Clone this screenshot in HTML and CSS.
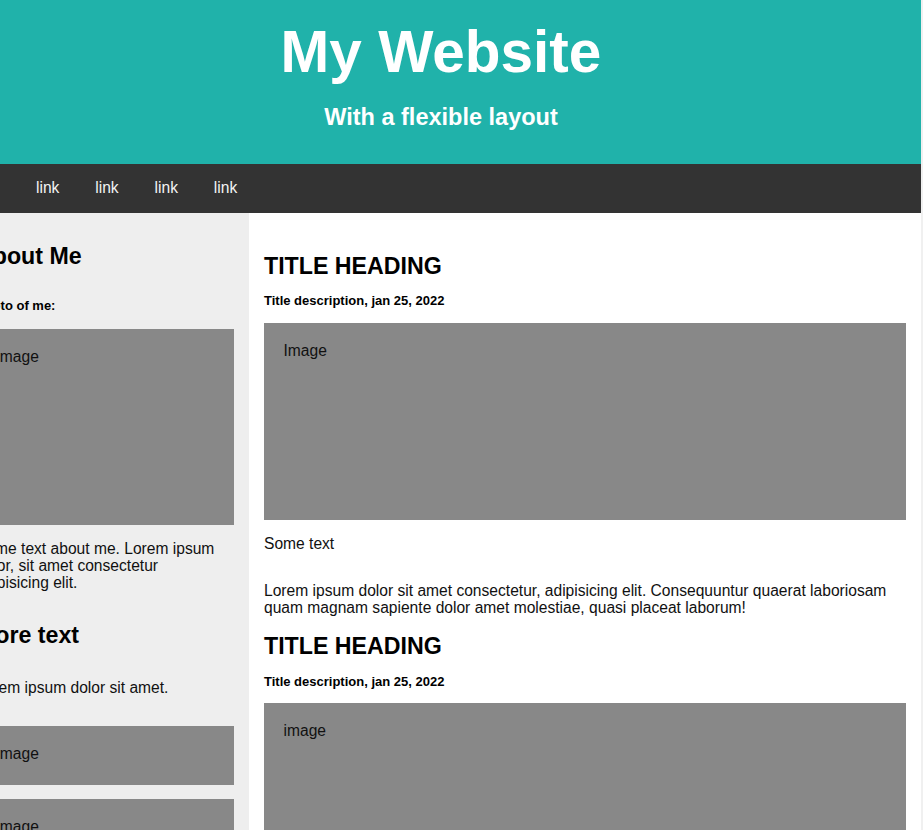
FILE: index.html
```html
<!DOCTYPE html>
<html lang="en">
<head>
<meta charset="utf-8">
<title>My Website</title>
<link rel="stylesheet" href="styles.css">
</head>
<body>
<div class="page">
  <header class="header">
    <h1 class="site-title">My Website</h1>
    <p class="tagline">With a flexible layout</p>
  </header>
  <nav class="topnav">
    <a href="#">link</a>
    <a href="#">link</a>
    <a href="#">link</a>
    <a href="#">link</a>
  </nav>
  <div class="row">
    <aside class="side">
      <h2 class="side-title">About Me</h2>
      <h5 class="side-sub">Photo of me:</h5>
      <div class="fakeimg side-photo">Image</div>
      <p class="side-text">Some text about me. Lorem ipsum dolor, sit amet consectetur adipisicing elit.</p>
      <h3 class="side-title2">More text</h3>
      <p class="side-text2">Lorem ipsum dolor sit amet.</p>
      <div class="fakeimg small first">Image</div>
      <div class="fakeimg small">Image</div>
      <div class="fakeimg small">Image</div>
    </aside>
    <main class="main">
      <article class="card">
        <h2 class="card-title">TITLE HEADING</h2>
        <h5 class="card-sub">Title description, jan 25, 2022</h5>
        <div class="fakeimg big">Image</div>
        <p class="card-text">Some text</p>
        <p class="card-lorem">Lorem ipsum dolor sit amet consectetur, adipisicing elit. Consequuntur quaerat laboriosam quam magnam sapiente dolor amet molestiae, quasi placeat laborum!</p>
      </article>
      <article class="card second">
        <h2 class="card-title">TITLE HEADING</h2>
        <h5 class="card-sub">Title description, jan 25, 2022</h5>
        <div class="fakeimg big">image</div>
      </article>
    </main>
  </div>
</div>
</body>
</html>
```
FILE: styles.css
```css
* {
  box-sizing: border-box;
}

html {
  overflow: hidden;
}

body {
  margin: 0;
  background: #f0f0f0;
  font-family: "Liberation Sans", Arial, sans-serif;
  font-size: 15.6px;
  color: #111;
}

.page {
  width: 960px;
  margin-left: -39px;
}

/* Header */
.header {
  background: #20b2aa;
  color: #fff;
  text-align: center;
  padding: 18px 0 33px;
}

.site-title {
  margin: 0;
  font-size: 58.5px;
  font-weight: bold;
  line-height: 67px;
}

.tagline {
  margin: 18.5px 0 0;
  font-size: 23.5px;
  font-weight: bold;
  line-height: 27px;
}

/* Nav */
.topnav {
  background: #333;
  display: flex;
  padding-left: 57.05px;
}

.topnav a {
  color: #f2f2f2;
  text-decoration: none;
  font-size: 15.6px;
  line-height: 21px;
  padding: 13px 17.95px 15px;
}

/* Columns */
.row {
  display: flex;
  align-items: stretch;
}

.side {
  width: 288px;
  flex: none;
  background: #eeeeee;
  padding: 0 15px;
}

.main {
  flex: 1;
  background: #fff;
  padding: 0 15px;
  min-height: 700px;
}

.fakeimg {
  background: #888;
  padding: 19.5px;
  line-height: 18px;
  color: #111;
}

/* Sidebar */
.side-title {
  margin: 30px 0 0;
  font-size: 23.2px;
  line-height: 27px;
  color: #000;
}

.side-sub {
  margin: 28px 0 0;
  font-size: 13px;
  line-height: 15px;
  color: #000;
}

.side-photo {
  margin-top: 16px;
  height: 196px;
}

.side-text {
  margin: 15px 0 0;
  line-height: 17px;
}

.side-title2 {
  margin: 31.5px 0 0;
  font-size: 23.2px;
  line-height: 27px;
  color: #000;
}

.side-text2 {
  margin: 29.5px 0 0;
  line-height: 17px;
}

.small {
  height: 59px;
  margin-top: 14px;
}

.small.first {
  margin-top: 30px;
}

/* Main cards */
.card-title {
  margin: 40px 0 0;
  font-size: 23.2px;
  line-height: 27px;
  color: #000;
}

.second .card-title {
  margin-top: 17px;
}

.card-sub {
  margin: 13px 0 0;
  font-size: 13px;
  line-height: 15px;
  color: #000;
}

.second .card-sub {
  margin-top: 14px;
}

.big {
  margin-top: 15px;
  height: 197px;
}

.second .big {
  margin-top: 14px;
}

.card-text {
  margin: 15px 0 0;
  line-height: 18px;
}

.card-lorem {
  margin: 29px 0 0;
  line-height: 17px;
}
```
